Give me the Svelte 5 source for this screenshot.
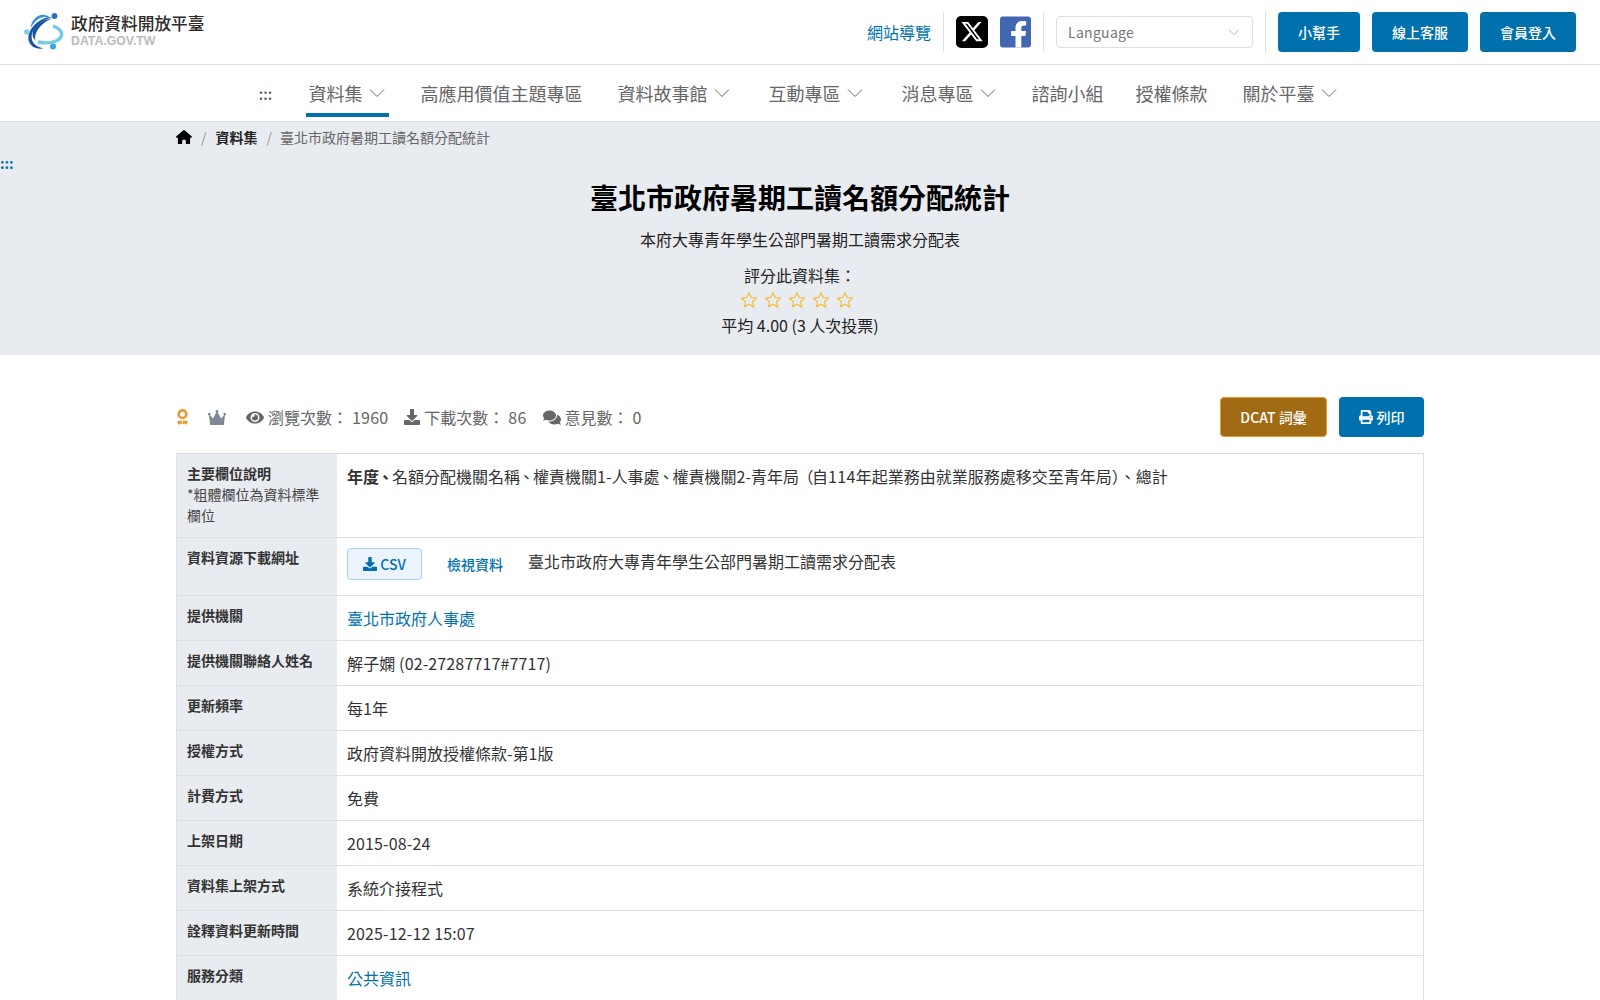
<script>
	const NAV = [
		{ label: '資料集', caret: true, active: true },
		{ label: '高應用價值主題專區' },
		{ label: '資料故事館', caret: true },
		{ label: '互動專區', caret: true },
		{ label: '消息專區', caret: true },
		{ label: '諮詢小組' },
		{ label: '授權條款' },
		{ label: '關於平臺', caret: true }
	];

	const ROWS = [
		{ label: '提供機關', value: '臺北市政府人事處', link: true },
		{ label: '提供機關聯絡人姓名', value: '解子嫻 (02-27287717#7717)', num: true },
		{ label: '更新頻率', value: '每1年' },
		{ label: '授權方式', value: '政府資料開放授權條款-第1版' },
		{ label: '計費方式', value: '免費' },
		{ label: '上架日期', value: '2015-08-24', num: true },
		{ label: '資料集上架方式', value: '系統介接程式' },
		{ label: '詮釋資料更新時間', value: '2025-12-12 15:07', num: true },
		{ label: '服務分類', value: '公共資訊', link: true }
	];

	const DOWNLOAD_D = 'M216 0h80c13.3 0 24 10.7 24 24v168h87.7c17.8 0 26.7 21.5 14.1 34.1L269.7 378.3c-7.5 7.5-19.8 7.5-27.3 0L90.1 226.1c-12.6-12.6-3.7-34.1 14.1-34.1H192V24c0-13.3 10.7-24 24-24zm296 376v112c0 13.3-10.7 24-24 24H24c-13.3 0-24-10.7-24-24V376c0-13.3 10.7-24 24-24h146.7l49 49c20.1 20.1 52.5 20.1 72.6 0l49-49H488c13.3 0 24 10.7 24 24z';
</script>

<header class="topbar">
	<a class="logo" href="#top">
		<svg class="logo_mark" viewBox="0 0 40 38" aria-hidden="true">
			<path d="M14 29C26 31.500 38.500 28 37.500 20.500 37 17 33.500 14.500 29 13" fill="none" stroke="#6fcbe8" stroke-width="3.400" />
			<path d="M6.500 15C7.500 7 14 .5 21 2c2.500.5 3.500 1 4.500 2.500-5-1.500-10 0-13.500 3.500-2 2-4 4.500-5.500 7z" fill="#3596d6" />
			<path d="M28.500 4C20 6.500 12.500 11.500 9 18 5.500 25 8 33 19.500 35.500c-4.500.5-9.500 0-12.500-3.500C2.500 27 4 19 9.500 13 15 7 21.500 3.500 28.500 4z" fill="#1a55a3" />
			<path d="M28 5.500C21.500 8 15.500 13 12.500 19c-1.500 3.500-2 6-1 8.500C7.500 24 8 19 10.500 15 15 9.500 21 6 28 5.500z" fill="#1a55a3" />
			<circle cx="30.500" cy="3" r="2.900" fill="#2f6fc0" />
			<circle cx="2.800" cy="19" r="2.700" fill="#7fd0ea" />
			<circle cx="29" cy="33.500" r="3" fill="#3aa5dd" />
		</svg>
		<span class="logo_text">
			<span class="logo_zh">政府資料開放平臺</span>
			<span class="logo_en">DATA.GOV.TW</span>
		</span>
	</a>

	<div class="tools">
		<a class="sitemap" href="#top">網站導覽</a>
		<span class="sep"></span>
		<a class="social" href="#top" aria-label="X">
			<svg viewBox="0 0 32 32">
				<rect width="32" height="32" rx="5" fill="#000" />
				<path transform="translate(5.5 5) scale(1.33)" d="M12.6.75h2.454l-5.36 6.142L16 15.25h-4.937l-3.867-5.07-4.425 5.07H.316l5.733-6.57L0 .75h5.063l3.495 4.633L12.601.75Zm-.86 13.028h1.36L4.323 2.145H2.865z" fill="#fff" />
			</svg>
		</a>
		<a class="social fb" href="#top" aria-label="Facebook">
			<svg viewBox="0 0 32 32">
				<rect width="32" height="32" rx="3" fill="#4267b2" />
				<path d="M22 32V20h4.200l.7-5H22v-3c0-1.500.7-2.600 2.800-2.600H27V5c-.8-.1-2.500-.3-4.200-.3-4.300 0-6.800 2.600-6.800 6.900V15h-4.500v5H16v12z" fill="#fff" />
			</svg>
		</a>
		<span class="sep"></span>
		<div class="lang">
			<span>Language</span>
			<svg class="caret small" viewBox="0 0 16 16"><path d="M2.500 5.500 8 11l5.500-5.500" /></svg>
		</div>
		<span class="sep"></span>
		<a class="btn" href="#top">小幫手</a>
		<a class="btn wide" href="#top">線上客服</a>
		<a class="btn wide" href="#top">會員登入</a>
	</div>
</header>

<nav class="mainnav">
	<span class="dots">:::</span>
	{#each NAV as item}
		<a class="nav_item" class:has_caret={item.caret} class:active={item.active} href="#top">
			{item.label}
			{#if item.caret}
				<svg class="caret" viewBox="0 0 16 16"><path d="M1 4.500 8 11.500l7-7" /></svg>
			{/if}
		</a>
	{/each}
</nav>

<section class="hero">
	<div class="crumbs">
		<svg class="crumb_home" viewBox="0 0 576 512"><path d="M575.800 255.500c0 18-15 32.100-32 32.100h-32l.7 160.200c0 2.700-.2 5.400-.5 8.100V472c0 22.100-17.900 40-40 40H456c-1.100 0-2.200 0-3.300-.1-1.400.1-2.800.1-4.200.1H392c-22.100 0-40-17.900-40-40v-88c0-17.700-14.300-32-32-32h-64c-17.700 0-32 14.300-32 32v88c0 22.100-17.900 40-40 40h-55.900c-1.500 0-3-.1-4.500-.2-1.200.1-2.400.2-3.600.2H104c-22.100 0-40-17.900-40-40V360c0-.9 0-1.900.1-2.800v-69.600H32c-18 0-32-14-32-32.100 0-9 3-17 10-24L266.400 8c7-7 15-8 22-8s15 2 21 7l255.400 224.500c8 7 12 15 11 24z" /></svg>
		<span class="slash">/</span>
		<b>資料集</b>
		<span class="slash">/</span>
		<span class="crumb_now">臺北市政府暑期工讀名額分配統計</span>
	</div>
	<div class="skip">:::</div>
	<h1>臺北市政府暑期工讀名額分配統計</h1>
	<p class="subtitle">本府大專青年學生公部門暑期工讀需求分配表</p>
	<p class="rate_label">評分此資料集：</p>
	<div class="stars">
		{#each [1, 2, 3, 4, 5] as star (star)}
			<svg viewBox="0 0 24 24"><path d="M12 2.500l2.900 6.300 6.900.8-5.100 4.700 1.400 6.800L12 17.600l-6.100 3.500 1.400-6.800-5.100-4.700 6.900-.8z" /></svg>
		{/each}
	</div>
	<p class="rate_avg">平均 4.00 (3 人次投票)</p>
</section>

<main class="content">
	<div class="meta">
		<div class="stats">
			<svg class="medal" viewBox="0 0 13 16">
				<circle cx="6.500" cy="5.200" r="3.800" fill="none" stroke="#e89a2c" stroke-width="2.600" />
				<path d="M1 12.200 6 11.400l.3 3.800-2-.7L2.600 16zM12 12.200 7 11.400l-.3 3.800 2-.7 1.700 1.500z" fill="#e89a2c" />
			</svg>
			<svg class="crown" viewBox="0 0 18 15">
				<circle cx="1.300" cy="4" r="1.300" />
				<circle cx="9" cy="1.300" r="1.300" />
				<circle cx="16.700" cy="4" r="1.300" />
				<path d="M.8 4 5 8.500 9 1l4 7.500L17.200 4 15.800 15H2.200z" />
			</svg>
			<span class="stat first_stat">
				<svg viewBox="0 0 576 512"><path d="M572.520 241.400C518.290 135.590 410.930 64 288 64S57.680 135.640 3.480 241.410a32.350 32.350 0 0 0 0 29.190C57.710 376.410 165.070 448 288 448s230.320-71.640 284.520-177.410a32.350 32.350 0 0 0 0-29.190zM288 400a144 144 0 1 1 144-144 143.930 143.930 0 0 1-144 144zm0-240a95.310 95.310 0 0 0-25.310 3.790 47.850 47.850 0 0 1-66.900 66.900A95.780 95.780 0 1 0 288 160z" /></svg>
				<span>瀏覽次數：<span class="count">1960</span></span>
			</span>
			<span class="stat">
				<svg class="stat_dl" viewBox="0 0 512 512"><path d={DOWNLOAD_D} /></svg>
				<span>下載次數：<span class="count">86</span></span>
			</span>
			<span class="stat">
				<svg viewBox="0 0 576 512"><path d="M416 192c0-88.400-93.100-160-208-160S0 103.600 0 192c0 34.300 14.100 65.900 38 92-13.400 30.200-35.500 54.200-35.800 54.500-2.200 2.300-2.800 5.700-1.500 8.700S4.800 352 8 352c36.600 0 66.900-12.300 88.700-25 32.200 15.700 70.300 25 111.300 25 114.900 0 208-71.600 208-160zm122 220c23.900-26 38-57.700 38-92 0-66.900-53.500-124.200-129.300-148.100.9 6.600 1.300 13.300 1.300 20.100 0 105.900-107.700 192-240 192-10.800 0-21.300-.8-31.700-1.900C207.800 439.600 281.800 480 368 480c41 0 79.100-9.200 111.300-25 21.800 12.700 52.100 25 88.700 25 3.200 0 6.100-1.900 7.300-4.800 1.300-2.900.7-6.300-1.500-8.700-.3-.3-22.400-24.200-35.800-54.500z" /></svg>
				<span>意見數：<span class="count">0</span></span>
			</span>
		</div>
		<div class="actions">
			<a class="btn dcat" href="#top">DCAT 詞彙</a>
			<a class="btn print" href="#top">
				<svg viewBox="0 0 512 512"><path d="M448 192V77.250c0-8.490-3.370-16.620-9.370-22.630L393.370 9.370c-6-6-14.140-9.370-22.630-9.370H96C78.330 0 64 14.330 64 32v160c-35.350 0-64 28.650-64 64v112c0 8.840 7.160 16 16 16h48v96c0 17.670 14.330 32 32 32h320c17.670 0 32-14.330 32-32v-96h48c8.840 0 16-7.160 16-16V256c0-35.350-28.650-64-64-64zm-64 256H128v-96h256v96zm0-224H128V64h192v48c0 8.840 7.160 16 16 16h48v96zm48 72c-13.250 0-24-10.750-24-24 0-13.260 10.750-24 24-24s24 10.740 24 24c0 13.250-10.750 24-24 24z" /></svg>
				列印
			</a>
		</div>
	</div>

	<div class="info">
		<div class="row first">
			<div class="key">
				<b>主要欄位說明</b>
				<span class="key_note">*粗體欄位為資料標準欄位</span>
			</div>
			<div class="val"><b>年度<span class="tight">、</span></b>名額分配機關名稱<span class="tight">、</span>權責機關1-人事處<span class="tight">、</span>權責機關2-青年局<span class="tight">（</span>自<span class="digits">114</span>年起業務由就業服務處移交至青年局）、總計</div>
		</div>
		<div class="row second">
			<div class="key"><b>資料資源下載網址</b></div>
			<div class="val files">
				<a class="csv" href="#top">
					<svg viewBox="0 0 512 512"><path d={DOWNLOAD_D} /></svg>
					CSV
				</a>
				<a class="preview" href="#top">檢視資料</a>
				<span class="file_name">臺北市政府大專青年學生公部門暑期工讀需求分配表</span>
			</div>
		</div>
		{#each ROWS as row}
			<div class="row">
				<div class="key"><b>{row.label}</b></div>
				<div class="val" class:num={row.num}>
					{#if row.link}
						<a href="#top">{row.value}</a>
					{:else}
						{row.value}
					{/if}
				</div>
			</div>
		{/each}
	</div>
</main>

<style>
	:global(body) {
		font-family: "Noto Sans CJK TC", "Noto Sans", sans-serif;
		color: #333;
		font-size: 16px;
		overflow-x: hidden;
	}

	a {
		text-decoration: none;
		color: #0071ad;
	}

	svg {
		display: block;
		flex: none;
	}

	.topbar {
		height: 65px;
		box-sizing: border-box;
		padding: 0 24px;
		display: flex;
		align-items: center;
		justify-content: space-between;
		border-bottom: 1px solid #dcdfe8;
	}

	.logo {
		display: flex;
		align-items: center;
		gap: 7px;
		color: #2b2b2b;
	}

	.logo_mark {
		width: 40px;
		height: 38px;
	}

	.logo_text {
		display: flex;
		flex-direction: column;
	}

	.logo_zh {
		font-size: 16.700px;
		font-weight: 500;
		line-height: 14px;
		color: #2e2a2a;
	}

	.logo_en {
		font-family: "Liberation Sans", sans-serif;
		font-size: 12.300px;
		font-weight: 700;
		line-height: 13px;
		margin-top: 5px;
		color: #bcbcbc;
	}

	.tools {
		display: flex;
		align-items: center;
	}

	.sitemap {
		margin-right: 12px;
	}

	.sep {
		width: 1px;
		height: 40px;
		background: #dcdfe8;
	}

	.social {
		display: block;
		width: 32px;
		height: 32px;
		margin-left: 12px;
	}

	.social svg {
		width: 100%;
		height: 32px;
	}

	.social.fb {
		width: 31px;
	}

	.social + .sep {
		margin-left: 12px;
	}

	.lang {
		width: 197px;
		height: 32px;
		box-sizing: border-box;
		margin: 0 12px;
		padding: 0 11px;
		border: 1px solid #dcdfe8;
		border-radius: 4px;
		display: flex;
		align-items: center;
		justify-content: space-between;
		color: #777;
		font-size: 14px;
		letter-spacing: 0.3px;
	}

	.btn {
		display: flex;
		align-items: center;
		justify-content: center;
		gap: 4px;
		height: 40px;
		box-sizing: border-box;
		background: #0071ad;
		color: #fff;
		font-size: 14px;
		font-weight: 500;
		border-radius: 4px;
	}

	.tools .btn {
		width: 82px;
		margin-left: 12px;
	}

	.tools .btn.wide {
		width: 96px;
	}

	.caret {
		width: 16px;
		height: 16px;
	}

	.caret path {
		fill: none;
		stroke: #666;
		stroke-width: 1;
	}

	.caret.small {
		width: 14px;
		height: 14px;
	}

	.caret.small path {
		stroke: #aaa;
	}

	.mainnav {
		height: 57px;
		box-sizing: border-box;
		display: flex;
		justify-content: center;
		align-items: flex-start;
		gap: 32px;
		padding-right: 2px;
		border-bottom: 1px solid #dcdfe8;
		font-size: 18px;
		color: #666;
	}

	.dots {
		width: 16px;
		height: 52px;
		padding-top: 4px;
		box-sizing: border-box;
		display: flex;
		align-items: center;
		justify-content: center;
		font-size: 15px;
		color: #555;
		font-weight: 500;
	}

	.nav_item {
		display: flex;
		align-items: center;
		gap: 6px;
		color: #666;
		height: 52px;
		padding-top: 4px;
		box-sizing: border-box;
	}

	.nav_item.has_caret {
		padding-left: 3px;
		padding-right: 4px;
	}

	.nav_item.active {
		border-bottom: 4px solid #0071ad;
		padding-top: 8px;
	}

	.hero {
		height: 233px;
		background: #e8ebf0;
		box-sizing: border-box;
		position: relative;
		text-align: center;
		color: #222;
	}

	.crumbs {
		width: 1248px;
		height: 30px;
		margin: 0 auto;
		display: flex;
		align-items: center;
		font-size: 14px;
		color: #222;
	}

	.crumb_home {
		width: 16px;
		height: 14px;
		fill: #000;
	}

	.slash {
		color: #999;
		margin: 0 9px;
		font-size: 14px;
	}

	.slash + b + .slash {
		margin-right: 8px;
	}

	.crumb_now {
		color: #666;
	}

	.skip {
		position: absolute;
		left: 0;
		top: 30px;
		font-size: 14px;
		font-weight: 700;
		line-height: 22px;
		color: #0071ad;
	}

	h1 {
		margin: 24px 0 0;
		font-size: 28px;
		line-height: 42px;
		font-weight: 700;
		color: #000;
	}

	.subtitle {
		margin: 9px 0 0;
		line-height: 24px;
	}

	.rate_label {
		margin: 12px 0 0;
		line-height: 24px;
	}

	.stars {
		display: flex;
		justify-content: center;
		gap: 6px;
		height: 26px;
		align-items: center;
		padding-right: 6px;
	}

	.stars svg {
		width: 18px;
		height: 18px;
	}

	.stars path {
		fill: none;
		stroke: #f4b92f;
		stroke-width: 1.500;
	}

	.rate_avg {
		margin: 0;
		line-height: 24px;
	}

	.content {
		width: 1248px;
		margin: 0 auto;
	}

	.meta {
		display: flex;
		align-items: center;
		justify-content: space-between;
		height: 40px;
		margin: 42px 0 16px;
	}

	.stats {
		display: flex;
		align-items: center;
		color: #666;
	}

	.medal {
		width: 13px;
		height: 16px;
	}

	.crown {
		width: 18px;
		height: 15px;
		fill: #7f8694;
		margin-left: 19px;
	}

	.stat {
		display: flex;
		align-items: center;
		gap: 4px;
		margin-left: 16px;
	}

	.stat.first_stat {
		margin-left: 20px;
	}

	.count {
		margin-left: 4px;
		letter-spacing: 0.2px;
	}

	.stat svg {
		width: 18px;
		height: 17px;
		fill: #666;
	}

	.stat svg.stat_dl {
		width: 16px;
		height: 16px;
	}

	.actions {
		display: flex;
		gap: 12px;
	}

	.dcat {
		width: 107px;
		background: #a16b14;
		border: 1px solid #e09a2f;
	}

	.print {
		width: 85px;
	}

	.print svg {
		width: 14px;
		height: 14px;
		fill: #fff;
	}

	.info {
		border: 1px solid #dcdfe4;
		border-bottom: 0;
	}

	.row {
		display: grid;
		grid-template-columns: 160px 1fr;
		height: 45px;
		box-sizing: border-box;
		border-bottom: 1px solid #dcdfe4;
	}

	.row.first {
		height: 84px;
	}

	.row.second {
		height: 58px;
	}

	.key {
		background: #e8ebf0;
		padding: 9px 10px 0;
		font-size: 14px;
		line-height: 21px;
		color: #333;
	}

	.key b {
		display: block;
	}

	.key_note {
		display: block;
		color: #444;
	}

	.val {
		padding: 10px;
		line-height: 24px;
		color: #333;
	}

	.val.num {
		letter-spacing: 0.13px;
	}

	.tight {
		margin: 0 -1.500px;
	}

	.digits {
		letter-spacing: 0.4px;
	}

	.files {
		display: flex;
		align-items: flex-start;
	}

	.csv {
		display: flex;
		align-items: center;
		gap: 3px;
		justify-content: center;
		width: 75px;
		height: 32px;
		box-sizing: border-box;
		background: #ebf4fd;
		border: 1px solid #a6d0f0;
		border-radius: 4px;
		font-size: 14px;
		font-weight: 500;
	}

	.csv svg {
		width: 14px;
		height: 14px;
		fill: currentColor;
	}

	.preview {
		margin: 4px 0 0 25px;
		font-size: 14px;
		font-weight: 500;
	}

	.file_name {
		margin: 1px 0 0 25px;
	}
</style>
